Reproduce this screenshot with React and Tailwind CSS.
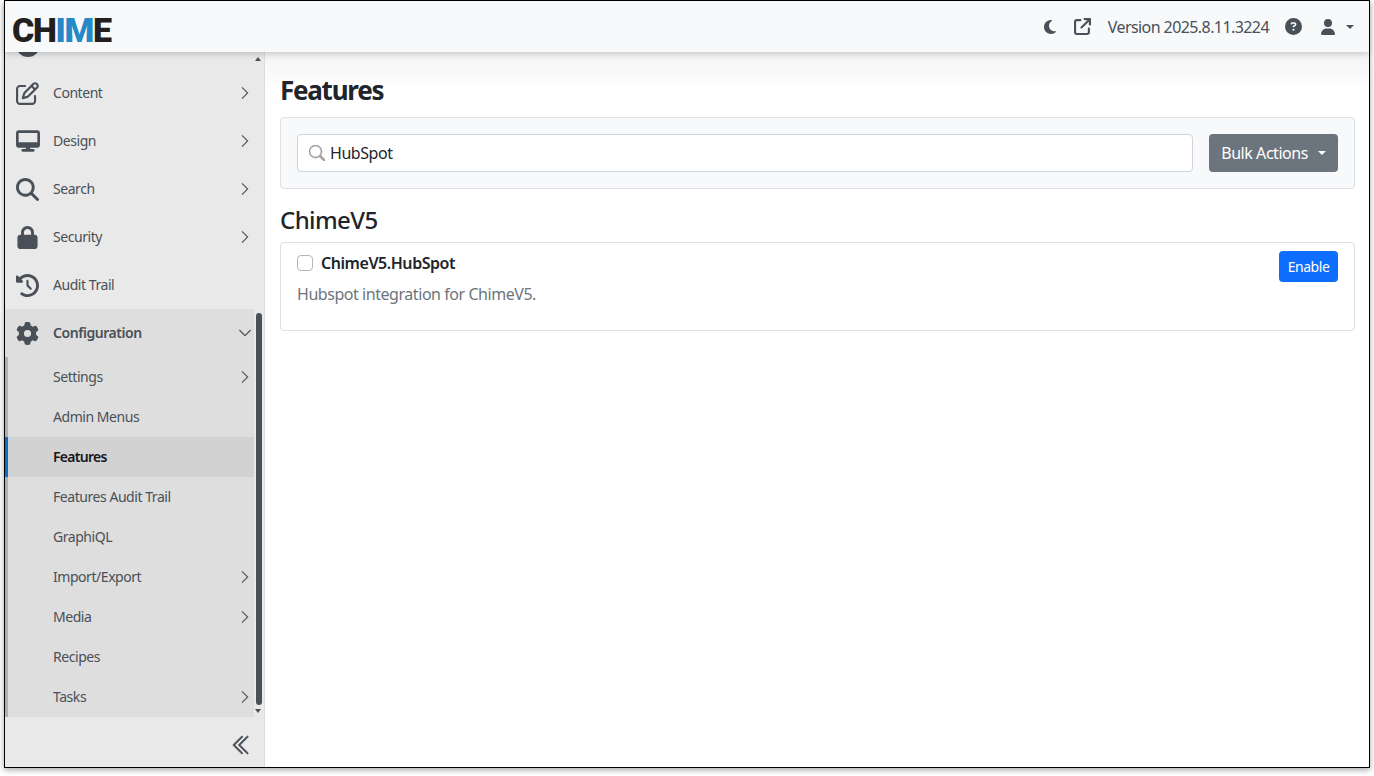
import React from "react";
import {
  FaArrowUpRightFromSquare,
  FaCircle,
  FaCircleQuestion,
  FaClockRotateLeft,
  FaDesktop,
  FaGear,
  FaLock,
  FaMagnifyingGlass,
  FaMoon,
  FaRegPenToSquare,
  FaUser,
} from "react-icons/fa6";
import { BsChevronDoubleLeft, BsChevronDown, BsChevronRight, BsSearch } from "react-icons/bs";

const topItems = [
  { label: "Content", icon: FaRegPenToSquare, arrow: true, size: "text-[23px]" },
  { label: "Design", icon: FaDesktop, arrow: true, size: "text-[24px]" },
  { label: "Search", icon: FaMagnifyingGlass, arrow: true, size: "text-[23px]" },
  { label: "Security", icon: FaLock, arrow: true, size: "text-[23px]" },
  { label: "Audit Trail", icon: FaClockRotateLeft, arrow: false, size: "text-[23px]" },
];

const subItems = [
  { label: "Settings", arrow: true },
  { label: "Admin Menus" },
  { label: "Features", active: true },
  { label: "Features Audit Trail" },
  { label: "GraphiQL" },
  { label: "Import/Export", arrow: true },
  { label: "Media", arrow: true },
  { label: "Recipes" },
  { label: "Tasks", arrow: true },
];

const Caret = ({ className }) => (
  <span className={`inline-block w-0 h-0 border-x-[4.5px] border-x-transparent border-t-[4.5px] ${className}`} />
);

const NavRow = ({ item }) => {
  const Icon = item.icon;
  return (
    <div className="flex items-center h-12 text-[#495057]">
      <div className={`flex items-center justify-center w-[45px] shrink-0 ${item.size}`}>
        <Icon />
      </div>
      <span className="flex-1 pl-[3px] text-sm tracking-[-0.45px]">{item.label}</span>
      {item.arrow && <BsChevronRight className="mr-3 text-[14px] text-[#495057] [&_path]:stroke-[0.5px] [&_path]:stroke-current" />}
    </div>
  );
};

const Sidebar = () => (
  <aside className="flex flex-col w-[260px] shrink-0 bg-[#e9e9e9] border-r border-[#dcdcdc]">
    <div className="relative flex-1 min-h-0 overflow-hidden">
      <div className="flex flex-col mt-[-31px] mr-[10px]">
        <div className="flex items-center h-12 text-[#495057]">
          <div className="flex items-center justify-center w-[45px] shrink-0 text-[24px]">
            <FaCircle />
          </div>
        </div>
        <div className="mr-[-10px]">
          {topItems.map((item) => (
            <NavRow key={item.label} item={item} />
          ))}
        </div>
        <div className="bg-[#dedede]">
          <div className="flex items-center h-12 text-[#495057]">
            <div className="flex items-center justify-center w-[45px] shrink-0 text-[23px]">
              <FaGear />
            </div>
            <span className="flex-1 pl-[3px] text-sm font-semibold tracking-[-0.45px]">Configuration</span>
            <BsChevronDown className="mr-0.5 text-[14px] [&_path]:stroke-[0.5px] [&_path]:stroke-current" />
          </div>
          <div className="border-l-[3px] border-[#b0b0b0]">
            {subItems.map((item) => (
              <div
                key={item.label}
                className={`flex items-center h-10 text-sm ${
                  item.active
                    ? "ml-[-3px] pl-[45px] bg-[#d2d2d2] font-semibold tracking-[-0.7px] text-[#16181b] border-l-[3px] border-[#0b6fc4]"
                    : "pl-[45px] tracking-[-0.45px] text-[#495057]"
                }`}
              >
                <span className="flex-1">{item.label}</span>
                {item.arrow && <BsChevronRight className="mr-0.5 text-[14px] text-[#495057] [&_path]:stroke-[0.5px] [&_path]:stroke-current" />}
              </div>
            ))}
          </div>
        </div>
      </div>
      {/* scrollbar */}
      <span className="absolute top-[5px] right-[3px] w-0 h-0 border-x-[3.5px] border-x-transparent border-b-[4px] border-b-[#495057]" />
      <div className="absolute top-[261px] right-[2px] bottom-[12px] w-[6px] rounded-full bg-[#495057]" />
      <span className="absolute bottom-[4px] right-[3px] w-0 h-0 border-x-[3.5px] border-x-transparent border-t-[4px] border-t-[#495057]" />
    </div>
    <div className="flex items-center justify-end h-[50px] pt-[5px] pr-[11px] text-[#495057]">
      <BsChevronDoubleLeft className="text-[22px] [&_path]:stroke-[0.6px] [&_path]:stroke-current" />
    </div>
  </aside>
);

const Header = () => (
  <header className="relative z-10 flex items-center justify-between h-[51px] pl-[7px] pr-[15px] bg-[#f8f9fa] shadow-[0_2px_6px_rgba(0,0,0,0.18)]">
    <div className="flex mt-[6px] text-[34px] leading-none font-black tracking-[-1.3px] font-['Roboto',sans-serif] text-[#231f20]">
      <span>CH</span>
      <span className="text-[#2588c9]">IM</span>
      <span>E</span>
    </div>
    <div className="flex items-center text-[#495057]">
      <FaMoon className="text-[16px] mr-4" />
      <FaArrowUpRightFromSquare className="text-[17px] mr-[17px]" />
      <span className="text-base tracking-[-0.58px] mr-4">Version 2025.8.11.3224</span>
      <FaCircleQuestion className="text-[17px] mr-[18px]" />
      <FaUser className="text-[16px] mr-[10px]" />
      <Caret className="border-t-[#495057]" />
    </div>
  </header>
);

const App = () => (
  <div className="w-screen h-screen bg-white font-['Noto_Sans',sans-serif] overflow-hidden">
    <div className="flex flex-col h-[768px] mx-1 border border-black shadow-[0_2px_6px_rgba(0,0,0,0.35)] bg-white">
      <Header />
      <div className="flex flex-1 min-h-0">
        <Sidebar />
        <main className="flex-1 min-w-0 pt-5 pl-[15px] pr-[14px] bg-gradient-to-b from-[#f4f4f4] to-white to-[40px] text-[#212529]">
          <h1 className="text-[26px] leading-9 font-bold tracking-[-1.25px]">Features</h1>
          <div className="flex items-center gap-4 h-[72px] mt-[9px] px-4 bg-[#f8f9fa] border border-[#dee2e6] rounded">
            <div className="flex flex-1 items-center h-[38px] pl-[11px] bg-white border border-[#ced4da] rounded">
              <BsSearch className="text-[16px] text-[#999] mr-[5px] [&_path]:stroke-[0.5px] [&_path]:stroke-current" />
              <span className="text-base tracking-[-0.45px]">HubSpot</span>
            </div>
            <button className="flex items-center gap-[10px] h-[38px] px-3 bg-[#6c757d] text-white text-base tracking-[-0.45px] rounded">
              Bulk Actions
              <Caret className="border-t-white" />
            </button>
          </div>
          <h2 className="mt-[14px] text-2xl leading-[34px] font-medium tracking-[-0.6px]">ChimeV5</h2>
          <div className="flex justify-between h-[89px] mt-[5px] pt-2 px-4 bg-white border border-[#dfdfdf] rounded">
            <div>
              <div className="flex items-center h-6">
                <span className="w-4 h-4 mr-2 bg-white border border-[#b5b5b5] rounded" />
                <span className="text-base font-semibold tracking-[-0.45px]">ChimeV5.HubSpot</span>
              </div>
              <p className="mt-[7px] text-base leading-6 text-[#6c757d] tracking-[-0.45px]">Hubspot integration for ChimeV5.</p>
            </div>
            <button className="w-[59px] h-[31px] bg-[#0d6efd] text-white text-sm tracking-[-0.45px] rounded">Enable</button>
          </div>
        </main>
      </div>
    </div>
  </div>
);

export default App;
